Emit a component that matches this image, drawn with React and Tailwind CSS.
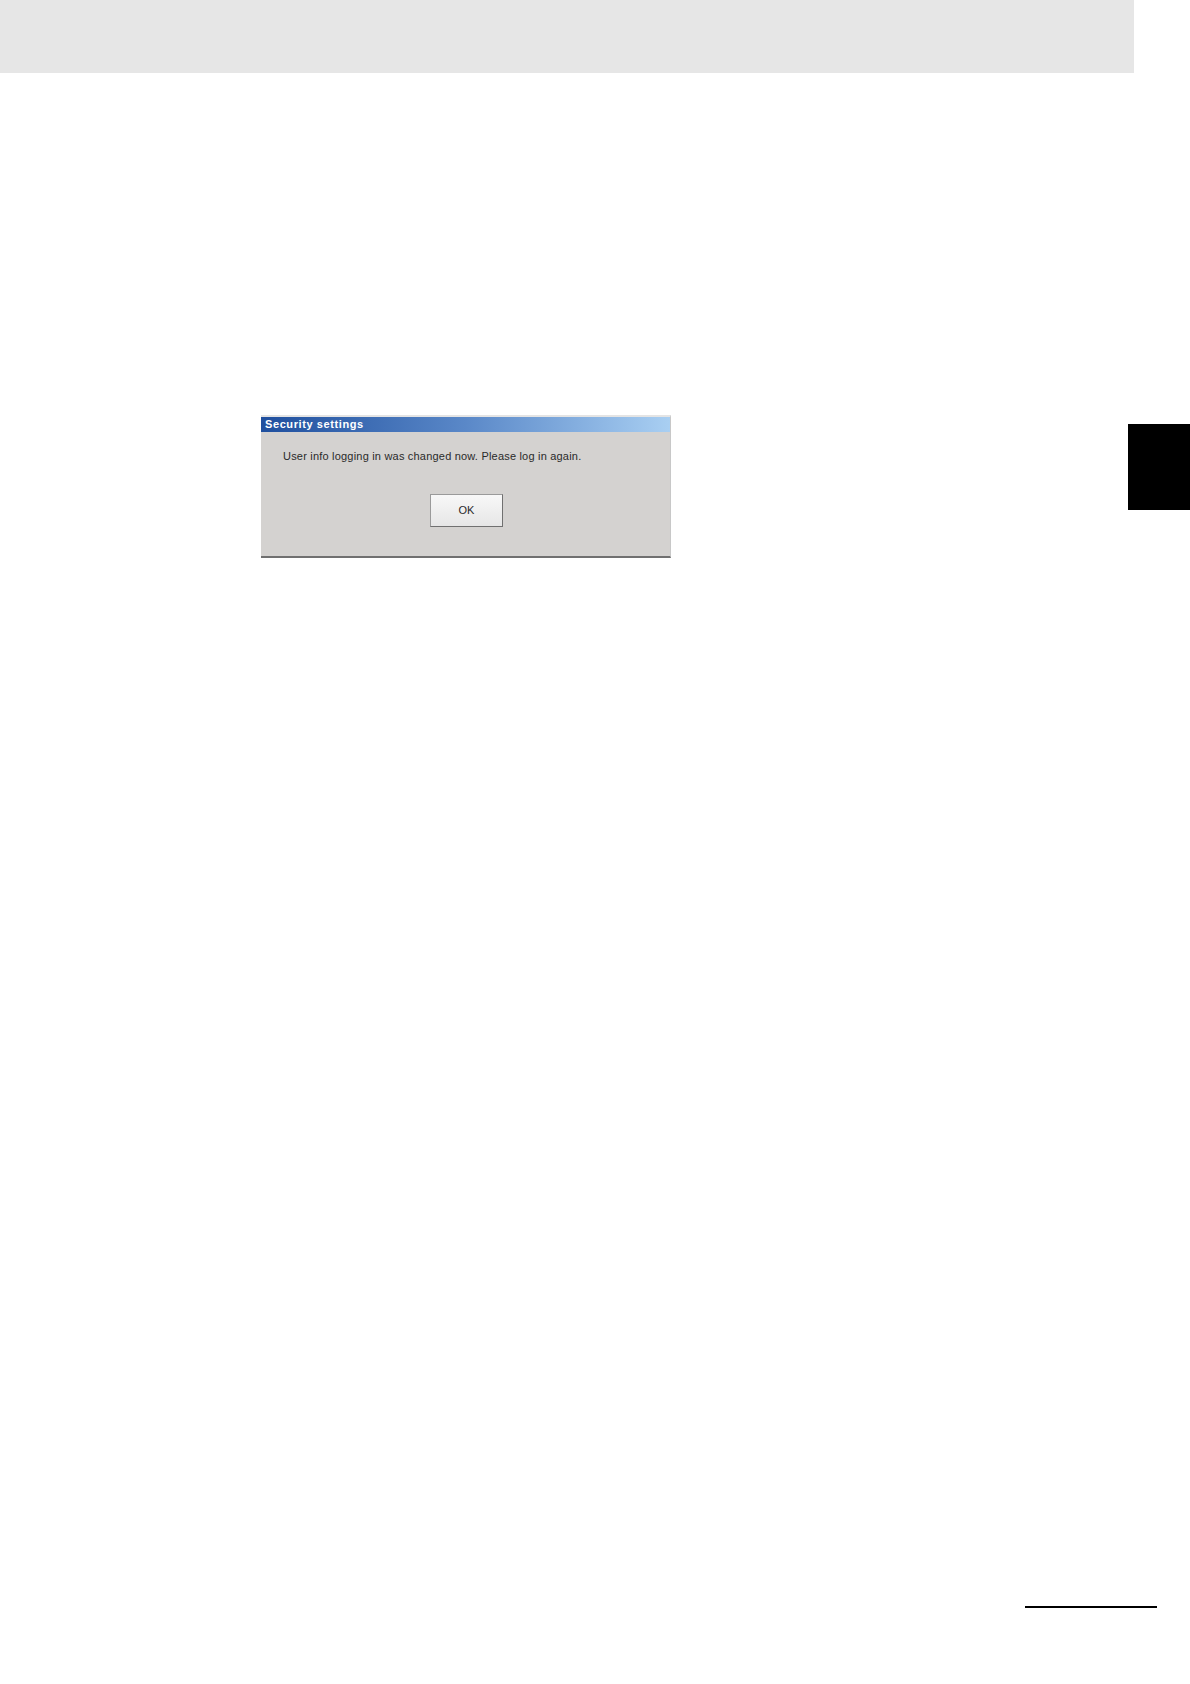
import React from "react";

export default function App() {
  return (
    <div className="relative w-[1190px] h-[1684px] bg-white overflow-hidden" style={{ fontFamily: "'Liberation Sans', Arial, sans-serif" }}>
      {/* page header band */}
      <div className="w-[1134px] h-[73px] bg-[#e6e6e6]" />

      {/* dialog */}
      <div className="ml-[261px] mt-[342px] w-[410px] border-t-2 border-t-[#e4e4e4] border-b-2 border-b-[#707070] border-r border-r-[#c8c8c8] bg-[#d4d2d0]">
        <div className="h-[15px] flex items-center px-[4px] bg-gradient-to-r from-[#1f4f9e] via-[#5a88c8] to-[#a9cff2]">
          <span className="text-[11px] leading-none font-bold text-white tracking-[0.6px]">
            Security settings
          </span>
        </div>
        <div className="pl-[22px] pt-[19px] text-[11px] leading-none text-[#2a2a2a] tracking-[0.2px]">
          User info logging in was changed now. Please log in again.
        </div>
        <div className="flex justify-center pt-[32px] pb-[29px] pl-[2px]">
          <button className="w-[73px] h-[33px] bg-gradient-to-b from-[#f8f8f8] to-[#e6e6e6] border border-[#9a9a9a] border-r-[#707070] border-b-[#707070] text-[11px] text-[#2a2a2a]">
            OK
          </button>
        </div>
      </div>

      {/* chapter tab on the right edge */}
      <div className="absolute left-[1128px] top-[424px] w-[62px] h-[86px] bg-black" />

      {/* footer rule */}
      <div className="absolute left-[1025px] top-[1606px] w-[132px] h-[2px] bg-black" />
    </div>
  );
}
